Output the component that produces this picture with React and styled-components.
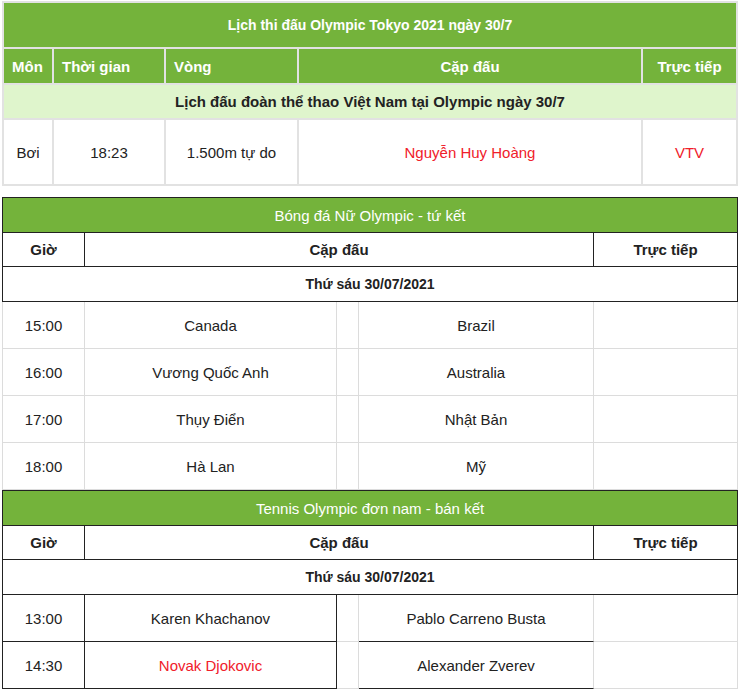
import styled, { createGlobalStyle } from 'styled-components';

const GREEN = '#74b33b';
const PALE = '#dff5cc';
const LIGHT = '#dcdcdc';
const DARK = '#222';
const RED = '#f0202a';

const GlobalStyle = createGlobalStyle`
    body {
        margin: 0;
        background: #fff;
        font-family: "Liberation Sans", Arial, sans-serif;
        color: #222;
    }
`;

const Page = styled.div`
    display: flex;
    flex-direction: column;
    gap: 11px;
    padding: 1px 2px 0;
`;

const Stack = styled.div`
    display: flex;
    flex-direction: column;
`;

const Table = styled.table`
    width: 736px;
    table-layout: fixed;
    border-collapse: separate;
    border-spacing: 0;
    font-size: 15px;
`;

const Row = styled.tr`
    height: ${props => props.$h}px;
`;

// every cell draws its own right and bottom line, the first one also the left
const Cell = styled.td`
    box-sizing: border-box;
    padding: 0 8px;
    text-align: ${props => props.$align || 'center'};
    font-weight: ${props => props.$bold ? 'bold' : 'normal'};
    font-size: ${props => props.$size || 15}px;
    color: ${props => props.$red ? RED : props.$white ? '#fff' : '#222'};
    background: ${props => props.$bg || '#fff'};
    border-right: ${props => props.$w || 1}px solid ${props => props.$right || LIGHT};
    border-bottom: ${props => props.$w || 1}px solid ${props => props.$bottom || props.$right || LIGHT};
    border-left: ${props => props.$left ? `${props.$w || 1}px solid ${props.$left}` : 'none'};
    border-top: ${props => props.$top ? `${props.$w || 1}px solid ${props.$top}` : 'none'};
    white-space: nowrap;
    overflow: hidden;
`;

const TOP_LINE = '#e2e2e2';

function OlympicTable() {
    const head = { $bg: GREEN, $white: true, $bold: true, $right: TOP_LINE, $w: 2 };
    const body = { $right: TOP_LINE, $w: 2 };
    return (
        <Table>
            <colgroup>
                <col style={{ width: 52 }} />
                <col style={{ width: 112 }} />
                <col style={{ width: 133 }} />
                <col style={{ width: 344 }} />
                <col style={{ width: 95 }} />
            </colgroup>
            <tbody>
                <Row $h={48}>
                    <Cell {...head} colSpan={5} $left={TOP_LINE} $top={TOP_LINE} $size={14}>
                        Lịch thi đấu Olympic Tokyo 2021 ngày 30/7
                    </Cell>
                </Row>
                <Row $h={36}>
                    <Cell {...head} $align="left" $left={TOP_LINE}>Môn</Cell>
                    <Cell {...head} $align="left">Thời gian</Cell>
                    <Cell {...head} $align="left">Vòng</Cell>
                    <Cell {...head}>Cặp đấu</Cell>
                    <Cell {...head}>Trực tiếp</Cell>
                </Row>
                <Row $h={35}>
                    <Cell {...body} $bg={PALE} $bold colSpan={5} $left={TOP_LINE}>
                        Lịch đấu đoàn thể thao Việt Nam tại Olympic ngày 30/7
                    </Cell>
                </Row>
                <Row $h={66}>
                    <Cell {...body} $left={TOP_LINE}>Bơi</Cell>
                    <Cell {...body}>18:23</Cell>
                    <Cell {...body}>1.500m tự do</Cell>
                    <Cell {...body} $red>Nguyễn Huy Hoàng</Cell>
                    <Cell {...body} $red>VTV</Cell>
                </Row>
            </tbody>
        </Table>
    );
}

const football = [
    ['15:00', 'Canada', 'Brazil'],
    ['16:00', 'Vương Quốc Anh', 'Australia'],
    ['17:00', 'Thụy Điển', 'Nhật Bản'],
    ['18:00', 'Hà Lan', 'Mỹ'],
];

const tennis = [
    ['13:00', 'Karen Khachanov', 'Pablo Carreno Busta'],
    ['14:30', 'Novak Djokovic', 'Alexander Zverev', true],
];

function EventTable({ title, rows, framed }) {
    const line = framed ? DARK : LIGHT;
    return (
        <Table>
            <colgroup>
                <col style={{ width: 83 }} />
                <col style={{ width: 252 }} />
                <col style={{ width: 22 }} />
                <col style={{ width: 235 }} />
                <col style={{ width: 144 }} />
            </colgroup>
            <tbody>
                <Row $h={36}>
                    <Cell colSpan={5} $bg={GREEN} $white $right={DARK} $left={DARK} $top={DARK}>
                        {title}
                    </Cell>
                </Row>
                <Row $h={34}>
                    <Cell $bold $right={DARK} $left={DARK}>Giờ</Cell>
                    <Cell $bold colSpan={3} $right={DARK}>Cặp đấu</Cell>
                    <Cell $bold $right={DARK}>Trực tiếp</Cell>
                </Row>
                <Row $h={35}>
                    <Cell $bold colSpan={5} $right={DARK} $left={DARK} $size={14}>
                        Thứ sáu 30/07/2021
                    </Cell>
                </Row>
                {rows.map(([time, home, away, homeWins]) => (
                    <Row $h={47} key={time}>
                        <Cell $left={line} $right={line}>{time}</Cell>
                        <Cell $right={line} $red={homeWins}>{home}</Cell>
                        <Cell />
                        <Cell $right={LIGHT} $bottom={line}>{away}</Cell>
                        <Cell />
                    </Row>
                ))}
            </tbody>
        </Table>
    );
}

export default function App() {
    return (
        <>
            <GlobalStyle />
            <Page>
                <OlympicTable />
                <Stack>
                    <EventTable title="Bóng đá Nữ Olympic - tứ kết" rows={football} />
                    <EventTable title="Tennis Olympic đơn nam - bán kết" rows={tennis} framed />
                </Stack>
            </Page>
        </>
    );
}
